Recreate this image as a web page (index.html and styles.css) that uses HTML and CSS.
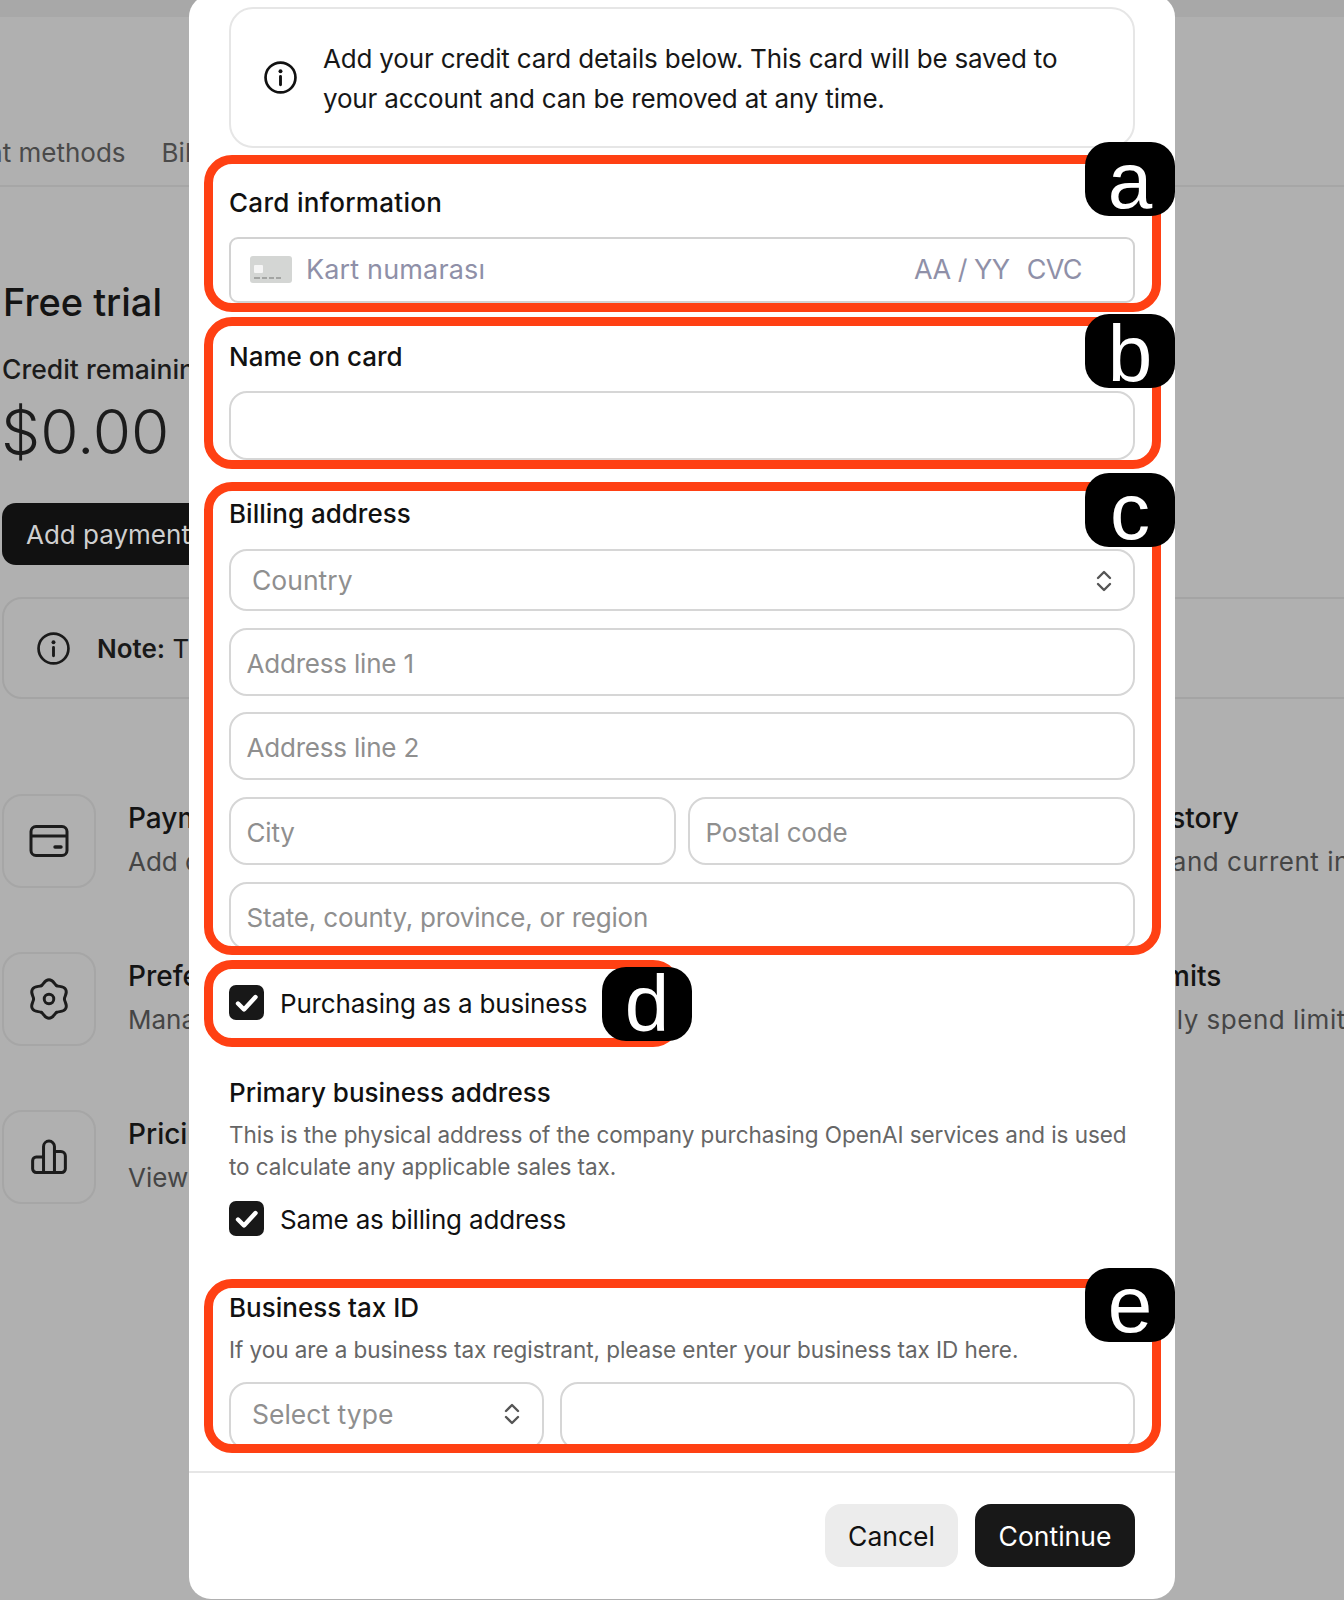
FILE: index.html
```html
<!DOCTYPE html>
<html lang="en">
<head>
<meta charset="utf-8">
<title>Add payment method</title>
<link rel="stylesheet" href="styles.css">
</head>
<body>
<div class="page">
  <div class="topbar"></div>
  <nav class="tabs"><span>Payment methods</span><span>Billing history</span></nav>
  <main class="main">
    <h1 class="trial">Free trial</h1>
    <div class="credit-label">Credit remaining</div>
    <div class="credit">$0.00</div>
    <button class="add-btn">Add payment details</button>
    <div class="note">
      <svg class="note-icon" viewBox="0 0 32 32"><circle cx="16" cy="16" r="14.5" fill="none" stroke="#1a1a1a" stroke-width="2.6"/><circle cx="16" cy="10" r="1.9" fill="#1a1a1a"/><path d="M16 15v8" stroke="#1a1a1a" stroke-width="2.8" stroke-linecap="round"/></svg>
      <span class="note-text"><b>Note:</b> This is a note on your free trial credit balance</span>
    </div>
    <div class="links">
      <div class="link">
        <div class="link-box"><svg class="ic" viewBox="0 0 44 44"><rect x="4" y="7.5" width="36" height="29" rx="5" fill="none" stroke="#1c1c1c" stroke-width="3"/><path d="M4 17h36" stroke="#1c1c1c" stroke-width="3"/><path d="M28 28h6" stroke="#1c1c1c" stroke-width="3.4" stroke-linecap="round"/></svg></div>
        <div class="link-text"><div class="link-title">Payment methods</div><div class="link-sub">Add or manage payment methods</div></div>
      </div>
      <div class="link">
        <div class="link-box"></div>
        <div class="link-text"><div class="link-title">Billing history</div><div class="link-sub sub-history">View past and current invoices</div></div>
      </div>
      <div class="link">
        <div class="link-box"><svg class="ic" viewBox="0 0 24 24"><g fill="none" stroke="#1c1c1c" stroke-width="1.6" stroke-linecap="round"><path d="M7.8 4.73C9.1 3.97 9.6 1.5 12 1.5S14.9 3.97 16.2 4.73"/><path transform="rotate(60 12 12)" d="M7.8 4.73C9.1 3.97 9.6 1.5 12 1.5S14.9 3.97 16.2 4.73"/><path transform="rotate(120 12 12)" d="M7.8 4.73C9.1 3.97 9.6 1.5 12 1.5S14.9 3.97 16.2 4.73"/><path transform="rotate(180 12 12)" d="M7.8 4.73C9.1 3.97 9.6 1.5 12 1.5S14.9 3.97 16.2 4.73"/><path transform="rotate(240 12 12)" d="M7.8 4.73C9.1 3.97 9.6 1.5 12 1.5S14.9 3.97 16.2 4.73"/><path transform="rotate(300 12 12)" d="M7.8 4.73C9.1 3.97 9.6 1.5 12 1.5S14.9 3.97 16.2 4.73"/><circle cx="12" cy="12" r="2.6"/></g></svg></div>
        <div class="link-text"><div class="link-title">Preferences</div><div class="link-sub">Manage your organization</div></div>
      </div>
      <div class="link">
        <div class="link-box"></div>
        <div class="link-text"><div class="link-title">Usage limits</div><div class="link-sub sub-limits">Set monthly spend limits</div></div>
      </div>
      <div class="link">
        <div class="link-box"><svg class="ic ic-bars" viewBox="0 0 44 44"><path d="M16 39H8a4 4 0 0 1-4-4V26a4 4 0 0 1 4-4h8M16 39V10.5a6 6 0 0 1 12 0V39M16 39h12M28 16h7a5 5 0 0 1 5 5v14a4 4 0 0 1-4 4h-8" fill="none" stroke="#1c1c1c" stroke-width="3.3" stroke-linejoin="round"/></svg></div>
        <div class="link-text"><div class="link-title">Pricing</div><div class="link-sub">View pricing and FAQs</div></div>
      </div>
    </div>
  </main>

  <section class="modal">
    <div class="modal-body">
      <div class="info">
        <svg class="info-icon" viewBox="0 0 32 32"><circle cx="16" cy="16" r="14.5" fill="none" stroke="#111" stroke-width="2.6"/><circle cx="16" cy="10" r="1.9" fill="#111"/><path d="M16 15v8" stroke="#111" stroke-width="2.8" stroke-linecap="round"/></svg>
        <p class="info-text">Add your credit card details below. This card will be saved to your account and can be removed at any time.</p>
      </div>

      <div class="group group-a">
        <div class="label label-card">Card information</div>
        <div class="card-field">
          <svg class="card-icon" viewBox="0 0 42 27"><rect width="42" height="27" rx="3" fill="#d4d6d4"/><rect x="4" y="9" width="9" height="8" rx="1" fill="#f5f5f5"/><path d="M4 22h6M12 22h5M19 22h5M26 22h5" stroke="#a3a5a3" stroke-width="2"/></svg>
          <span class="card-num">Kart numarası</span>
          <span class="card-exp">AA / YY</span>
          <span class="card-cvc">CVC</span>
        </div>
        <div class="frame"></div>
        <div class="badge">a</div>
      </div>

      <div class="group group-b">
        <div class="label">Name on card</div>
        <div class="field"></div>
        <div class="frame"></div>
        <div class="badge">b</div>
      </div>

      <div class="group group-c">
        <div class="label">Billing address</div>
        <div class="stack">
          <div class="field field-select"><span class="select-text">Country</span>
            <svg class="updown" viewBox="0 0 16 26"><path d="M2 10l6-6 6 6M2 16l6 6 6-6" fill="none" stroke="#555" stroke-width="2.4" stroke-linecap="round" stroke-linejoin="round"/></svg></div>
          <div class="field">Address line 1</div>
          <div class="field">Address line 2</div>
          <div class="two"><div class="field">City</div><div class="field">Postal code</div></div>
          <div class="field">State, county, province, or region</div>
        </div>
        <div class="frame"></div>
        <div class="badge">c</div>
      </div>

      <div class="group group-d">
        <label class="check"><span class="box"><svg viewBox="0 0 35 35"><path d="M9 18.5l6 6L26.5 12" fill="none" stroke="#fff" stroke-width="4.4" stroke-linecap="round" stroke-linejoin="round"/></svg></span>Purchasing as a business</label>
        <div class="frame"></div>
        <div class="badge">d</div>
      </div>

      <div class="label label-primary">Primary business address</div>
      <p class="desc desc-primary">This is the physical address of the company purchasing OpenAI services and is used to calculate any applicable sales tax.</p>
      <label class="check check-same"><span class="box"><svg viewBox="0 0 35 35"><path d="M9 18.5l6 6L26.5 12" fill="none" stroke="#fff" stroke-width="4.4" stroke-linecap="round" stroke-linejoin="round"/></svg></span>Same as billing address</label>

      <div class="group group-e">
        <div class="label">Business tax ID</div>
        <p class="desc desc-tax">If you are a business tax registrant, please enter your business tax ID here.</p>
        <div class="tax-row">
          <div class="field field-select tax-type"><span class="select-text">Select type</span>
            <svg class="updown" viewBox="0 0 16 26"><path d="M2 10l6-6 6 6M2 16l6 6 6-6" fill="none" stroke="#555" stroke-width="2.4" stroke-linecap="round" stroke-linejoin="round"/></svg></div>
          <div class="field tax-id"></div>
        </div>
        <div class="frame"></div>
        <div class="badge">e</div>
      </div>
    </div>
    <footer class="modal-foot">
      <button class="btn btn-cancel">Cancel</button>
      <button class="btn btn-continue">Continue</button>
    </footer>
  </section>
</div>
</body>
</html>
```

FILE: styles.css
```css
* { box-sizing: border-box; }
html, body { margin: 0; padding: 0; }
body { font-family: Inter, "Liberation Sans", sans-serif; color: #111; }
h1, p { margin: 0; }

.page { position: relative; height: 1600px; overflow: hidden; background: #b0b0b0; }
.topbar { height: 17px; background: #a8a8a8; }
.tabs { height: 170px; display: flex; align-items: flex-end; gap: 36px; margin-left: -96px; padding-bottom: 14px; border-bottom: 2px solid #a6a6a6; font-size: 26px; line-height: 36px; color: #4a4a4a; white-space: nowrap; }

.main { padding-left: 2px; white-space: nowrap; }
.trial { margin-top: 91px; margin-left: 1px; font-size: 38px; line-height: 48px; font-weight: 500; color: #141414; }
.credit-label { margin-top: 25px; font-size: 26.5px; line-height: 36px; font-weight: 500; color: #1c1c1c; }
.credit { margin-top: 9px; margin-left: -1px; font-size: 62px; line-height: 72px; font-weight: 300; color: #1c1c1c; }
.add-btn { display: block; margin-top: 35px; width: 300px; height: 62px; padding: 0 0 0 24px; border: 0; border-radius: 14px; background: #111; color: #cfcfcf; font: inherit; font-size: 26px; text-align: left; }
.note { display: flex; align-items: center; gap: 27px; margin-top: 32px; width: 1400px; height: 102px; padding-left: 33px; border: 2px solid #a4a4a4; border-radius: 20px; font-size: 26px; color: #1a1a1a; }
.note-icon { width: 33px; height: 33px; }
.note-text b { font-weight: 600; }

.links { display: grid; grid-template-columns: 930px auto; grid-auto-rows: 94px; row-gap: 64px; margin-top: 95px; }
.link { display: flex; gap: 32px; }
.link-box { display: flex; align-items: center; justify-content: center; flex: none; width: 94px; height: 94px; border: 2px solid #a6a6a6; border-radius: 20px; }
.ic { width: 44px; height: 44px; }
.ic-bars { width: 40px; height: 40px; }
.link-text { padding-top: 6px; line-height: 36px; }
.link-title { font-size: 28px; font-weight: 500; color: #141414; }
.link-sub { margin-top: 8px; font-size: 26px; color: #454545; }
.sub-history { margin-left: -19px; letter-spacing: 0.5px; }
.sub-limits { margin-left: -11px; letter-spacing: 0.5px; }

.modal { position: absolute; left: 189px; top: -5px; width: 986px; height: 1604px; display: flex; flex-direction: column; background: #fff; border-radius: 22px; }
.modal-body { flex: 1; padding: 12px 40px 0 40px; }

.info { display: flex; align-items: center; gap: 26px; height: 141px; padding-left: 33px; border: 2px solid #e6e6e6; border-radius: 24px; }
.info-icon { flex: none; width: 33px; height: 33px; }
.info-text { width: 770px; padding-top: 2px; font-size: 26px; line-height: 39.5px; letter-spacing: -0.18px; color: #171717; }

.group { position: relative; }
.label { font-size: 26px; line-height: 36px; font-weight: 500; color: #111; }
.label-card { padding-top: 1px; margin-bottom: -1px; letter-spacing: 0.3px; }
.frame { position: absolute; left: -25px; right: -26px; border: 9px solid #ff4013; border-radius: 28px; pointer-events: none; }
.badge { position: absolute; right: -40px; width: 90px; height: 74px; display: flex; align-items: center; justify-content: center; border-radius: 24px; background: #000; color: #fff; font-family: "Liberation Sans", Arial, sans-serif; font-size: 80px; line-height: 76px; }

.group-a { margin-top: 36px; }
.group-a .frame { top: -29px; bottom: -9px; }
.group-a .badge { top: -42px; padding-top: 4px; }
.group-b { margin-top: 35px; }
.group-b .label { padding-top: 1px; margin-bottom: -1px; }
.group-b .frame { top: -21px; bottom: -9px; }
.group-b .badge { top: -24px; padding-top: 6px; }
.group-c { margin-top: 36px; }
.group-c .frame { top: -14px; bottom: -5px; }
.group-c .badge { top: -23px; padding-top: 4px; }
.group-d { margin-top: 36px; }
.group-d .frame { top: -26px; bottom: -26px; right: 454px; }
.group-d .badge { top: -19px; left: 373px; right: auto; }
.group-e { margin-top: 52px; }
.group-e > .label { padding-top: 1px; margin-bottom: -1px; }
.group-e .frame { top: -10px; bottom: -3px; }
.group-e .badge { top: -21px; }

.card-field { display: flex; align-items: center; height: 66px; margin-top: 17px; padding-left: 19px; padding-bottom: 2px; border: 2px solid #d2d2d2; border-radius: 9px; font-size: 27px; color: #8f90a8; }
.card-icon { flex: none; width: 42px; height: 27px; margin-right: 14px; }
.card-num { flex: 1; letter-spacing: 0.15px; }
.card-exp { letter-spacing: -0.5px; }
.card-cvc { margin-left: 17px; margin-right: 51px; letter-spacing: -0.6px; }

.field { height: 68px; padding-left: 15.5px; padding-top: 1px; border: 2px solid #d6d6d6; border-radius: 18px; font-size: 26px; line-height: 66px; letter-spacing: -0.2px; color: #8f8f8f; }
.group-b .field { height: 69px; margin-top: 17px; }
.stack { display: flex; flex-direction: column; gap: 16.7px; margin-top: 17px; }
.two { display: grid; grid-template-columns: 1fr 1fr; gap: 12px; }
.field-select { display: flex; align-items: center; justify-content: space-between; height: 62px; padding: 1px 21px 0 21px; line-height: 1; letter-spacing: 0; }
.select-text { font-size: 26.5px; }
.updown { width: 16px; height: 26px; }

.check { display: flex; align-items: center; gap: 16px; height: 35px; padding-top: 1px; font-size: 26px; letter-spacing: -0.18px; color: #111; }
.box { flex: none; width: 35px; height: 35px; margin: -1px 0 1px; border-radius: 7px; background: #181818; }
.box svg { display: block; width: 35px; height: 35px; }

.label-primary { margin-top: 54px; }
.desc { max-width: 906px; font-size: 22.5px; line-height: 32px; color: #666; }
.desc-primary { margin-top: 8px; letter-spacing: -0.05px; }
.check-same { margin-top: 19px; }
.desc-tax { margin-top: 9px; letter-spacing: -0.05px; }
.tax-row { display: flex; gap: 16px; margin-top: 16px; }
.tax-type { flex: none; width: 315px; height: 68px; padding: 0 22px 3px 21px; }
.tax-id { flex: 1; }

.modal-foot { display: flex; justify-content: flex-end; gap: 17px; padding: 31px 40px 32px 0; border-top: 2px solid #e6e6e6; }
.btn { height: 63px; border: 0; border-radius: 16px; font: inherit; font-size: 26.5px; }
.btn-cancel { width: 133px; background: #ececec; color: #111; }
.btn-continue { width: 160px; background: #181818; color: #fff; }
```
